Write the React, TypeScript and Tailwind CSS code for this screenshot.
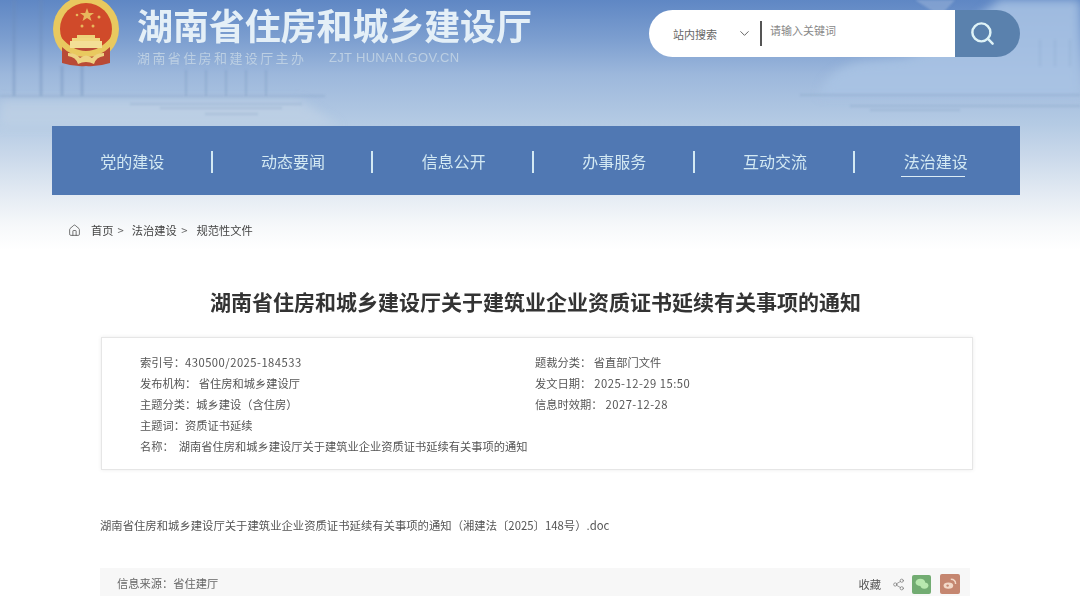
import React from "react";
import { ChevronDown, Search, House, Share2 } from "lucide-react";

const cjk = "font-['Noto_Sans_CJK_SC','Noto_Sans',sans-serif]";

function Emblem() {
  return (
    <svg viewBox="0 0 68 68" className="w-[68px] h-[68px] block">
      <circle cx="34" cy="29" r="33" fill="#e9c95f" />
      <circle cx="34" cy="29" r="26" fill="#d04a2a" />
      <path d="M10 46 L58 46 L58 63 Q46 67 34 66 Q22 67 10 63 Z" fill="#b94a36" />
      <path d="M8 36 Q20 51 34 51 Q48 51 60 36 L58 47 Q48 57 34 57 Q20 57 10 47 Z" fill="#e9c95f" />
      <rect x="20" y="38" width="28" height="3" fill="#f0d77e" />
      <rect x="25" y="35" width="18" height="3" fill="#edd27a" />
      <rect x="18" y="41" width="32" height="7" fill="#f3df96" />
      <polygon points="35,8 36.8,13 42,13 38,16 39.5,21 35,18 30.5,21 32,16 28,13 33.2,13" fill="#e8b75c" />
      <circle cx="25" cy="15" r="1.3" fill="#e8b75c" />
      <circle cx="47" cy="17" r="1.5" fill="#e8b75c" />
      <circle cx="30" cy="26" r="1.5" fill="#e8b75c" />
      <circle cx="41" cy="26" r="1.5" fill="#e8b75c" />
      <path d="M16 53 Q24 53 28 58 Q34 53 40 58 Q44 53 52 53 L52 56 Q44 57 42 64 Q34 60 26 64 Q24 57 16 56 Z" fill="#eed382" />
    </svg>
  );
}

function Scenery() {
  return (
    <svg viewBox="0 0 1080 240" className="absolute left-0 top-0 w-[1080px] h-[240px]" preserveAspectRatio="none">
      <defs>
        <filter id="soft"><feGaussianBlur stdDeviation="1.2" /></filter>
        <filter id="softer"><feGaussianBlur stdDeviation="5" /></filter>
      </defs>
      <g filter="url(#softer)">
        <path d="M820 96 Q825 70 860 62 L905 58 Q935 50 960 30 L1000 0 L1080 0 L1080 96 Z" fill="#a9c3e4" opacity="0.85" />
        <path d="M0 100 L300 100 L340 126 L0 126 Z" fill="#c3d4e6" opacity="0.6" />
      </g>
      <path d="M915 0 L940 16 L955 0 Z" fill="#8eaad4" opacity="0.7" filter="url(#soft)" />
      <g stroke="#6d8db5" filter="url(#soft)" fill="none">
        <path d="M14 0V96M41 0V96M62 66V96M82 66V96" strokeWidth="3" opacity="0.35" />
        <path d="M186 70V96M206 70V96M226 70V96M246 70V96M266 70V96" strokeWidth="2" opacity="0.28" />
        <path d="M0 96H325" strokeWidth="2" opacity="0.22" />
        <path d="M130 104H302M160 108H282M205 114H258" strokeWidth="1.5" opacity="0.28" />
        <path d="M800 95H1080M850 106H1080M870 110H960" strokeWidth="1.5" opacity="0.25" />
        <path d="M1040 40V66M1055 40V66M1070 40V66" strokeWidth="2" opacity="0.14" />
      </g>
    </svg>
  );
}

const navItems = ["党的建设", "动态要闻", "信息公开", "办事服务", "互动交流", "法治建设"];

const left: [string, string, boolean][] = [
  ["索引号：", "430500/2025-184533", true],
  ["发布机构：", " 省住房和城乡建设厅", false],
  ["主题分类：", "城乡建设（含住房）", false],
  ["主题词：", "资质证书延续", false],
];
const right: [string, string, boolean][] = [
  ["题裁分类：", " 省直部门文件", false],
  ["发文日期：", " 2025-12-29 15:50", true],
  ["信息时效期：", " 2027-12-28", true],
];

function Row({ a, b, wide }: { a: string; b: string; wide: boolean }) {
  return (
    <div>
      {a}
      <span className={wide ? "tracking-[0.47px]" : ""}>{b}</span>
    </div>
  );
}

export default function App() {
  return (
    <div className={`relative w-[1080px] h-[596px] overflow-hidden bg-white blur-[0.5px] ${cjk}`}>
      <div className="absolute left-0 top-0 w-[1080px] h-[250px] bg-[linear-gradient(180deg,#5f87c4_0%,#7d9fd0_16%,#9db8dc_30%,#b5cbe4_50%,#c9d8ea_62%,#e4ebf3_78%,#f6f8fa_90%,#ffffff_100%)]" />
      <Scenery />
      <div className="relative">
        <header className="h-[126px] px-[52px] flex items-start">
          <div className="w-[68px]"><Emblem /></div>
          <div className="ml-[17px] w-[512px] pt-[1px]">
            <div className="text-[36px] leading-[46px] font-bold tracking-[-0.1px] text-[#e4eff7] whitespace-nowrap">湖南省住房和城乡建设厅</div>
            <div className="flex items-center text-[#bccfe3] text-[13px] leading-[18px] mt-[2px] whitespace-nowrap">
              <span className="w-[192px] tracking-[2.4px]">湖南省住房和建设厅主办</span>
              <span className="tracking-[0.3px] font-['Liberation_Sans',sans-serif]">ZJT HUNAN.GOV.CN</span>
            </div>
          </div>
          <div className="flex h-[47px] w-[371px] mt-[10px]">
            <div className="relative flex items-center w-[306px] bg-white rounded-l-[24px] pl-[24px] text-[11px] text-[#666]">
              <span className="w-[64px] mt-[1px]">站内搜索</span>
              <ChevronDown size={15} strokeWidth={1.6} className="text-[#666] mr-[8px]" />
              <span className="w-[2px] h-[25px] bg-[#555]" />
              <span className="ml-[8px] -mt-[6px] text-[#888]">请输入关键词</span>
            </div>
            <div className="flex-1 bg-[#5a81ad] rounded-r-[24px] flex items-center pl-[14px]">
              <Search size={27} strokeWidth={2.2} className="text-[#dff3f7] -mt-[1px]" />
            </div>
          </div>
        </header>

        <nav className="mx-[52px] w-[968px] pr-[4px] h-[69px] bg-[#5078b3] grid grid-cols-6 items-center">
          {navItems.map((n, i) => (
            <div key={n} className="relative flex justify-center text-[16px] text-[#d3e9f3]">
              <span className="relative">
                {n}
                {i === 5 && <span className="absolute left-[-3px] right-[3px] top-[27px] h-[1px] bg-[#dcecf5]" />}
              </span>
              {i < 5 && <span className="absolute right-0 top-[2px] w-[2px] h-[22px] bg-[#d3e9f3]" />}
            </div>
          ))}
        </nav>

        <div className="flex items-center h-[71px] pl-[68px] text-[11.25px] text-[#444] whitespace-nowrap">
          <House size={13} strokeWidth={1.5} className="text-[#555] mr-[10px]" />
          <span>首页</span>
          <span className="mx-[4px] text-[#666]">&gt;</span>
          <span className="ml-[4px]">法治建设</span>
          <span className="mx-[4.5px] text-[#666]">&gt;</span>
          <span className="ml-[4.5px]">规范性文件</span>
        </div>

        <h1 className="mt-[20px] pr-[9px] text-center text-[21px] leading-[30px] font-bold text-[#333] whitespace-nowrap">
          湖南省住房和城乡建设厅关于建筑业企业资质证书延续有关事项的通知
        </h1>

        <section className="mt-[21px] ml-[101px] w-[872px] h-[133px] border border-[#e6e6e6] shadow-[0_0_4px_rgba(0,0,0,0.08)] pl-[38px] pt-[14px] text-[11.25px] leading-[21px] text-[#555] whitespace-pre">
          <div className="flex">
            <div className="w-[395px]">
              {left.map(([a, b, w]) => (
                <Row key={a} a={a} b={b} wide={w} />
              ))}
            </div>
            <div>
              {right.map(([a, b, w]) => (
                <Row key={a} a={a} b={b} wide={w} />
              ))}
            </div>
          </div>
          <div>{"名称：  湖南省住房和城乡建设厅关于建筑业企业资质证书延续有关事项的通知"}</div>
        </section>

        <p className="mt-[45px] ml-[100px] text-[11.35px] leading-[20px] text-[#555] whitespace-nowrap">
          湖南省住房和城乡建设厅关于建筑业企业资质证书延续有关事项的通知（湘建法〔2025〕148号）.doc
        </p>

        <footer className="mt-[33px] ml-[100px] w-[870px] h-[40px] bg-[#f7f7f7] flex items-start pt-[6px] pl-[17px] pr-[10px] text-[11.25px] leading-[18px] text-[#666]">
          <span>信息来源：省住建厅</span>
          <div className="ml-auto flex items-center gap-[5px]">
            <span className="text-[#555] mr-[3px]">收藏</span>
            <Share2 size={13} strokeWidth={1.3} className="text-[#777] ml-[3px]" />
            <span className="flex items-center justify-center ml-[2px] w-[19px] h-[19px] bg-[#72ac72] rounded-[2px]">
              <svg viewBox="0 0 20 20" className="w-[16px] h-[16px]">
                <ellipse cx="8" cy="8" rx="6" ry="4.6" fill="#b7e8ae" />
                <ellipse cx="13" cy="12" rx="5" ry="3.9" fill="#b7e8ae" />
              </svg>
            </span>
            <span className="flex items-center justify-center ml-[4px] w-[20px] h-[20px] bg-[#c58670] rounded-[2px]">
              <svg viewBox="0 0 20 20" className="w-[16px] h-[16px]">
                <ellipse cx="8" cy="12" rx="6" ry="4" fill="#f2d8c8" />
                <path d="M11 4 Q17 4 17 10" stroke="#f2d8c8" strokeWidth="1.8" fill="none" />
                <circle cx="7" cy="12" r="1.5" fill="#c58670" />
              </svg>
            </span>
          </div>
        </footer>
      </div>
    </div>
  );
}
